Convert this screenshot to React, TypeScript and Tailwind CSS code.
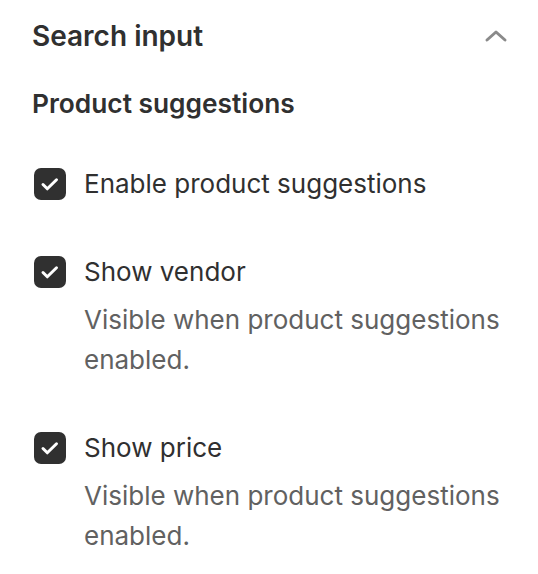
import React from "react";

function Check() {
  return (
    <div className="w-8 h-8 rounded-[7px] bg-[#303030] shrink-0">
      <svg width="32" height="32" viewBox="0 0 32 32" fill="none">
        <path d="M9 16.5l4.3 4.3L22.5 11.8" stroke="#fff" strokeWidth="3" strokeLinecap="round" strokeLinejoin="round" />
      </svg>
    </div>
  );
}

function Item({ label, desc }: { label: string; desc?: string }) {
  return (
    <div className="flex items-start gap-[18px]">
      <div className="h-10 flex items-center ml-[2px]">
        <Check />
      </div>
      <div className="flex flex-col gap-2">
        <div className="text-[26px] leading-[40px] text-[#303030]">{label}</div>
        {desc && <div className="text-[26px] leading-[40px] text-[#616161]">{desc}</div>}
      </div>
    </div>
  );
}

export default function App() {
  return (
    <div className="w-[538px] h-[574px] bg-white px-8 pt-4" style={{ fontFamily: "Inter, 'Noto Sans', sans-serif" }}>
      <div className="flex items-center justify-between h-10">
        <div className="text-[28px] font-semibold text-[#303030] leading-[40px]">Search input</div>
        <svg width="24" height="16" viewBox="0 0 24 16" fill="none" className="-mr-[2px]">
          <path d="M3 12l9-8 9 8" stroke="#8a8a8a" strokeWidth="3" strokeLinecap="round" strokeLinejoin="round" />
        </svg>
      </div>
      <div className="mt-7 text-[26.3px] font-semibold text-[#303030] leading-[40px]">Product suggestions</div>
      <div className="mt-10 flex flex-col gap-12">
        <Item label="Enable product suggestions" />
        <Item label="Show vendor" desc="Visible when product suggestions enabled." />
        <Item label="Show price" desc="Visible when product suggestions enabled." />
      </div>
    </div>
  );
}
